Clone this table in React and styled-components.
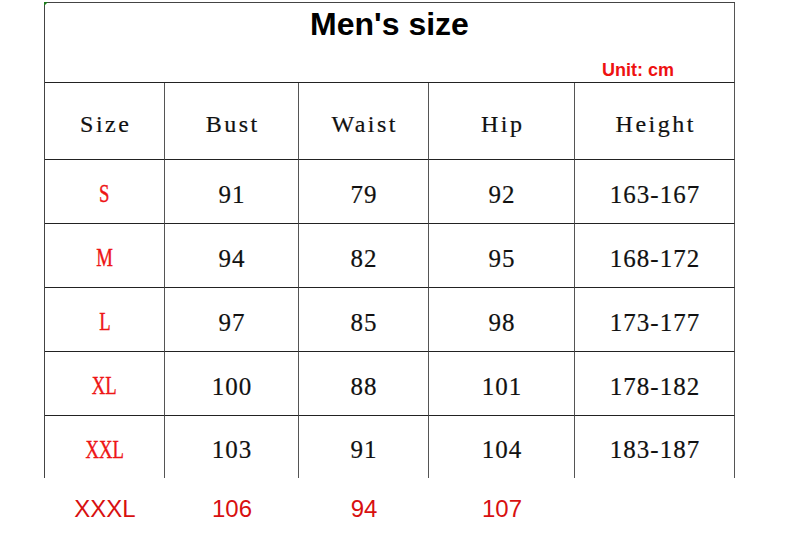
import React from 'react';
import styled, { createGlobalStyle } from 'styled-components';

const GlobalStyle = createGlobalStyle`
  html, body {
    margin: 0;
    padding: 0;
    background: #fff;
  }
`;

// page wrapper
const Page = styled.div`
  padding: 2px 0 0 44px;
  width: 796px;
  height: 549px;
  box-sizing: border-box;
`;

const Grid = styled.div`
  position: relative;
  display: grid;
  grid-template-columns: 120px 134px 130px 146px 160px;
  width: 691px;
  box-sizing: border-box;
  border-top: 1px solid #444;
  border-left: 1px solid #444;

  &::before {
    content: '';
    position: absolute;
    left: -1px;
    top: -1px;
    width: 0;
    height: 0;
    border-top: 4px solid #1e7b1e;
    border-right: 4px solid transparent;
  }
`;

// title block
const TitleCell = styled.div`
  grid-column: 1 / -1;
  height: 80px;
  box-sizing: border-box;
  border-right: 1px solid #555;
  border-bottom: 1px solid #222;
  padding: 5px 0 3px;
  display: flex;
  flex-direction: column;
  justify-content: space-between;
`;

const Title = styled.h1`
  margin: 0;
  align-self: center;
  font-family: 'Liberation Sans', Arial, sans-serif;
  font-weight: bold;
  font-size: 32px;
  line-height: 1;
  color: #000;
`;

const Unit = styled.div`
  align-self: flex-end;
  margin-right: 60px;
  font-family: 'Liberation Sans', Arial, sans-serif;
  font-weight: bold;
  font-size: 18px;
  line-height: 1;
  color: #ee1111;
`;

// table cells
const Cell = styled.div`
  height: ${(p) => p.$h}px;
  box-sizing: border-box;
  border-right: 1px solid #555;
  border-bottom: ${(p) => (p.$last ? 'none' : '1px solid #222')};
  padding-top: ${(p) => p.$pt}px;
  display: flex;
  align-items: center;
  justify-content: center;
  line-height: 1;
  white-space: nowrap;
`;

const HeadText = styled.span`
  font-family: 'Liberation Serif', 'Times New Roman', serif;
  font-size: 24px;
  letter-spacing: 2.5px;
  margin-right: -2.5px;
  color: #111;
  -webkit-text-stroke: 0.2px #111;
`;

const SizeText = styled.span`
  display: inline-block;
  font-family: 'Liberation Serif', 'Times New Roman', serif;
  font-size: 26px;
  color: #ee1515;
  transform: scaleX(0.72);
  -webkit-text-stroke: 0.4px #ee1515;
`;

const Num = styled.span`
  font-family: 'Liberation Serif', 'Times New Roman', serif;
  font-size: 25px;
  letter-spacing: 1px;
  margin-right: -1px;
  color: #111;
  -webkit-text-stroke: 0.2px #111;
`;

// extra row below, outside the table borders
const ExtraRow = styled.div`
  display: grid;
  grid-template-columns: 120px 134px 130px 146px 160px;
  padding-left: 1px;
`;

const LooseCell = styled.div`
  height: 62px;
  display: flex;
  align-items: center;
  justify-content: center;
  font-family: 'Liberation Sans', Arial, sans-serif;
  font-size: 24px;
  line-height: 1;
  color: #d81010;
`;

const headers = ['Size', 'Bust', 'Waist', 'Hip', 'Height'];

const rows = [
  ['S', '91', '79', '92', '163-167'],
  ['M', '94', '82', '95', '168-172'],
  ['L', '97', '85', '98', '173-177'],
  ['XL', '100', '88', '101', '178-182'],
  ['XXL', '103', '91', '104', '183-187'],
];

const extra = ['XXXL', '106', '94', '107', ''];

const App = () => {
  return (
    <>
      <GlobalStyle />
      <Page>
        <Grid>
          <TitleCell>
            <Title>Men's size</Title>
            <Unit>Unit: cm</Unit>
          </TitleCell>

          {headers.map((h) => (
            <Cell key={h} $h={77} $pt={6}>
              <HeadText>{h}</HeadText>
            </Cell>
          ))}

          {rows.map((r, ri) =>
            r.map((v, ci) => (
              <Cell
                key={`${ri}-${ci}`}
                $h={ri === rows.length - 1 ? 62 : 64}
                $pt={5}
                $last={ri === rows.length - 1}
              >
                {ci === 0 ? <SizeText>{v}</SizeText> : <Num>{v}</Num>}
              </Cell>
            ))
          )}
        </Grid>

        <ExtraRow>
          {extra.map((v, i) => (
            <LooseCell key={i}>{v}</LooseCell>
          ))}
        </ExtraRow>
      </Page>
    </>
  );
};

export default App;
